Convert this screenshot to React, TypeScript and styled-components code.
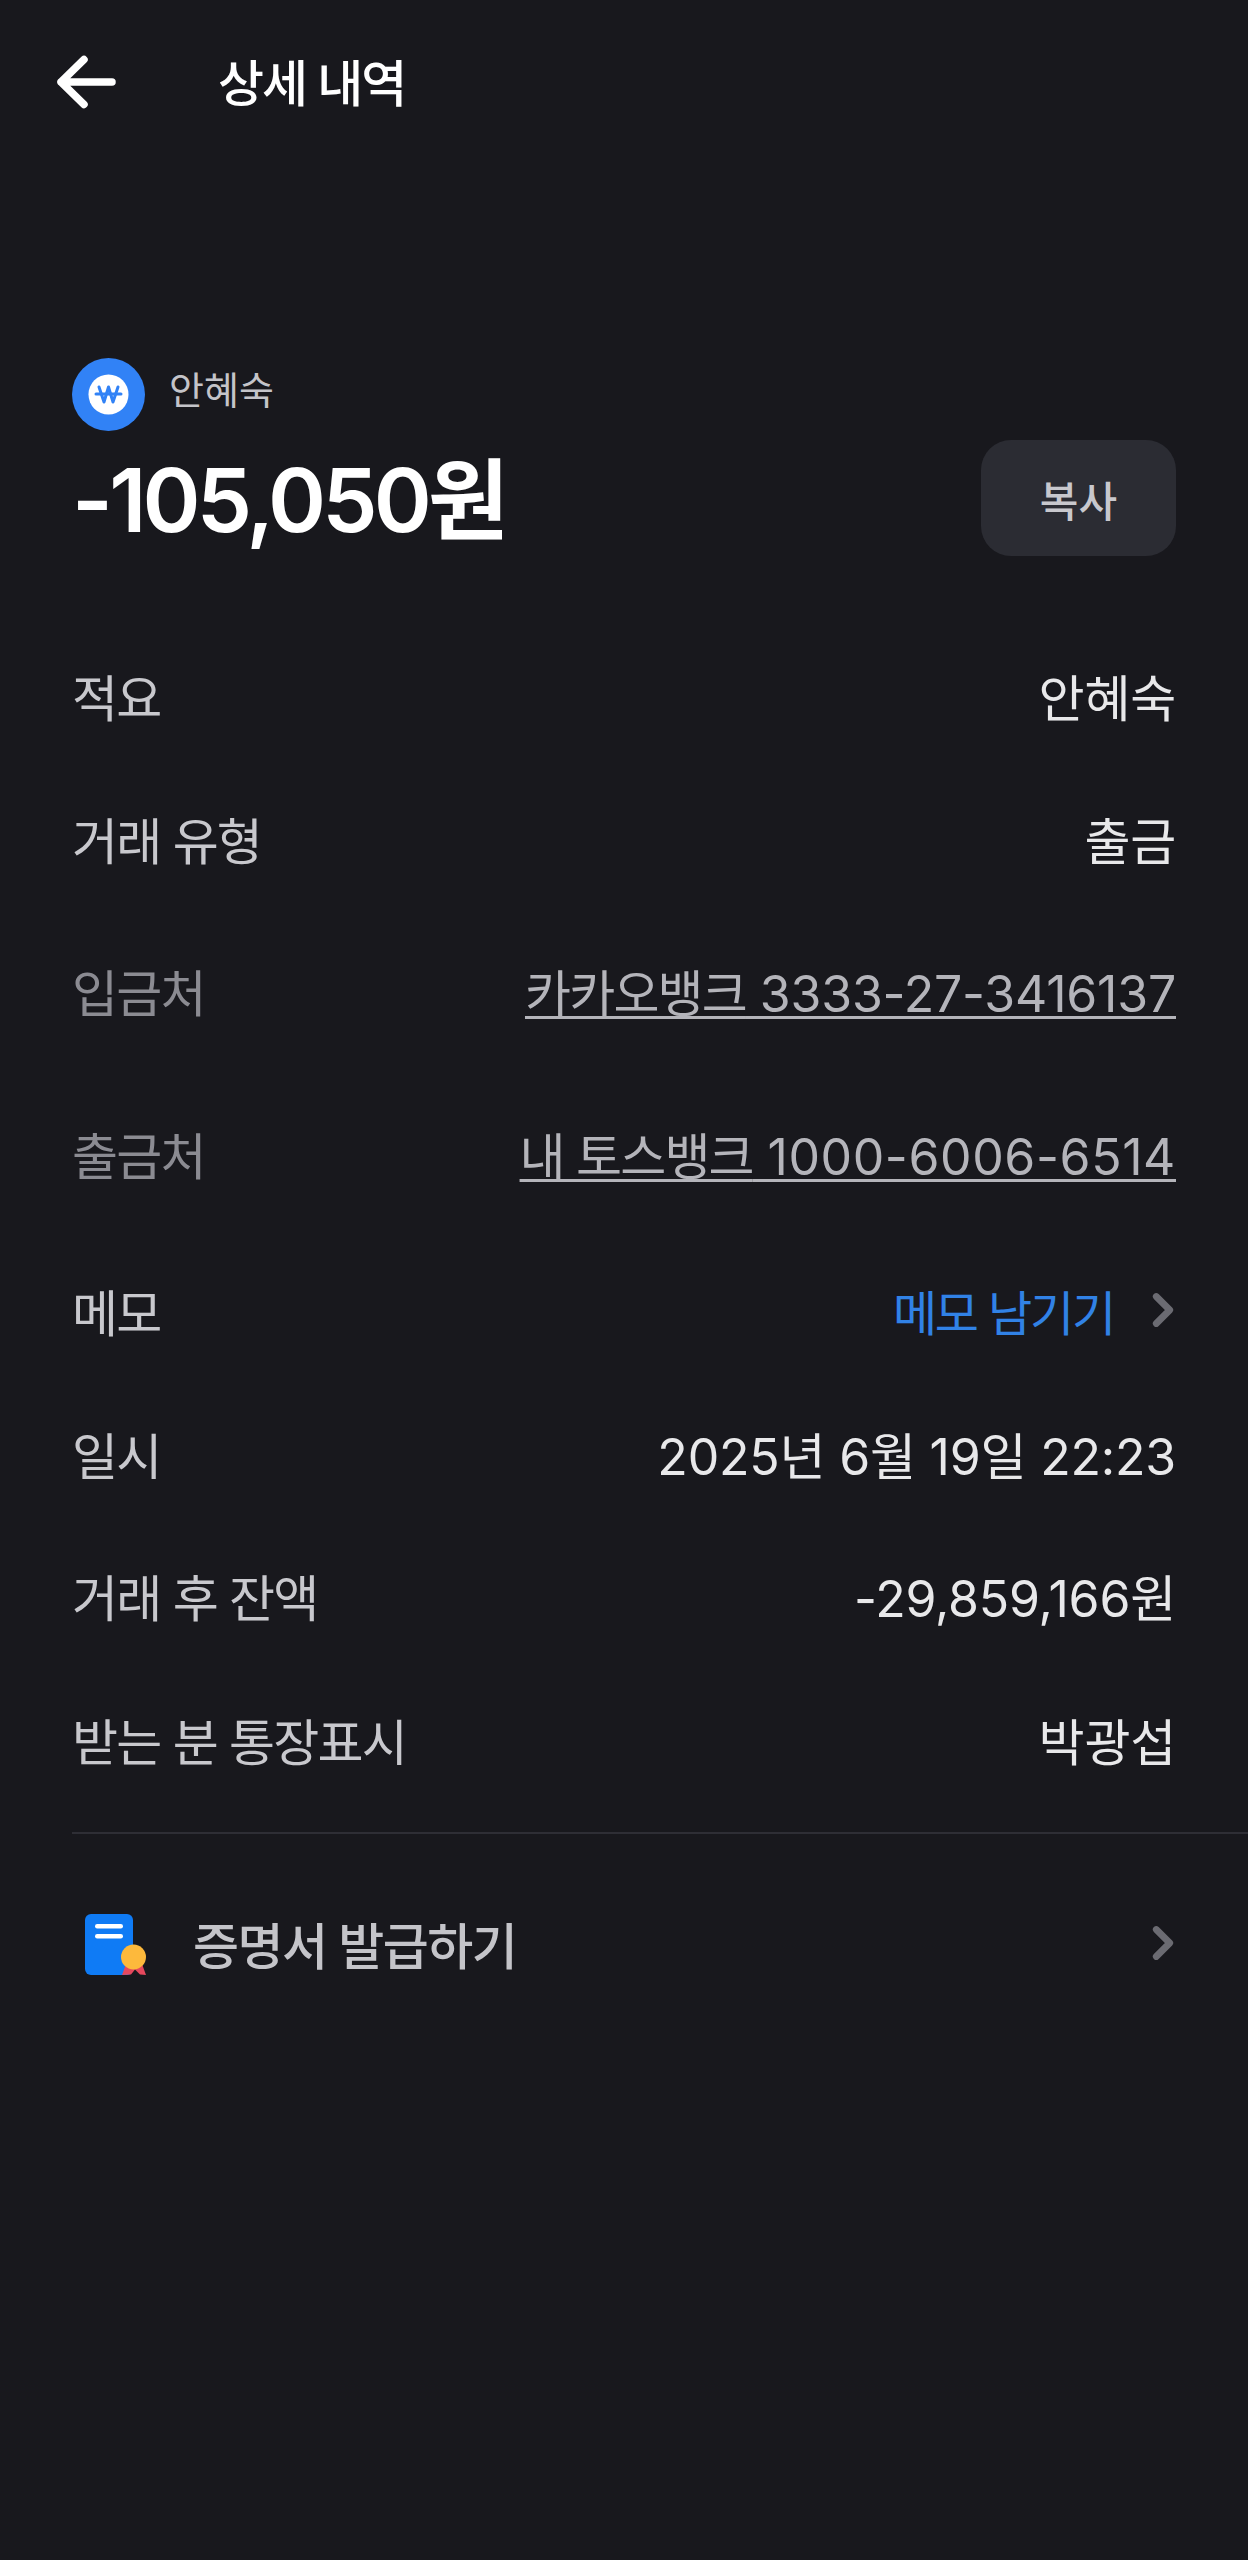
import styled, { createGlobalStyle } from 'styled-components';
import { ChevronRight } from 'lucide-react';

const GlobalStyle = createGlobalStyle`
  html, body {
    margin: 0;
    background: #18181d;
  }
  * {
    box-sizing: border-box;
  }
`;

const Page = styled.div`
  width: 1248px;
  height: 2560px;
  background: #18181d;
  font-family: Inter, 'Noto Sans CJK KR', sans-serif;
  color: #eeeef0;
  overflow: hidden;
`;

const Header = styled.header`
  display: flex;
  align-items: center;
  height: 164px;
  padding-left: 54px;
`;

const BackIcon = styled.svg`
  flex: none;
  width: 66px;
  height: 58px;
`;

const Title = styled.h1`
  margin: -5px 0 0 98px;
  font-size: 50px;
  font-weight: 500;
  letter-spacing: -2px;
  color: #fff;
`;

const Summary = styled.section`
  display: flex;
  align-items: flex-end;
  justify-content: space-between;
  margin-top: 194px;
  padding: 0 72px;
`;

const SummaryText = styled.div`
  display: flex;
  flex-direction: column;
`;

const Account = styled.div`
  display: flex;
  align-items: center;
  gap: 24px;
`;

const AccountName = styled.span`
  font-size: 38px;
  color: #c4c4c9;
  margin-bottom: 14px;
`;

const Amount = styled.div`
  font-size: 88px;
  line-height: 100px;
  font-weight: 600;
  letter-spacing: -3.8px;
  color: #fff;
  margin-top: 19px;
`;

const CopyButton = styled.button`
  width: 195px;
  height: 116px;
  margin-bottom: -6px;
  border: 0;
  border-radius: 30px;
  background: #2b2c33;
  color: #c8c8cd;
  font-family: inherit;
  font-size: 42px;
  font-weight: 500;
`;

const Rows = styled.div`
  display: flex;
  flex-direction: column;
  margin-top: 73px;
`;

const Row = styled.div<{ $height: number }>`
  display: flex;
  align-items: center;
  justify-content: space-between;
  height: ${(p) => p.$height}px;
  padding: 0 72px;
  font-size: 50px;
  letter-spacing: -0.2px;
`;

const Label = styled.span<{ $muted?: boolean }>`
  letter-spacing: -1.8px;
  color: ${(p) => (p.$muted ? '#8b8b92' : '#c8c8cd')};
`;

const Value = styled.span`
  color: #e8e8ea;
`;

const LinkValue = styled.span<{ $spacing: number }>`
  color: #b4b4ba;
  letter-spacing: ${(p) => p.$spacing}px;
  text-decoration: underline;
  text-underline-offset: 4px;
  text-decoration-thickness: 3px;
`;

const BankName = styled.span`
  letter-spacing: -1.8px;
`;

const MemoLink = styled.span`
  display: flex;
  align-items: center;
  gap: 22px;
  font-size: 48px;
  letter-spacing: -2.2px;
  color: #3182e6;
`;

const Chevron = styled(ChevronRight)`
  flex: none;
  color: #6b6b72;
  margin-right: -14px;
`;

const Divider = styled.div`
  height: 2px;
  margin: 23px 0 0 72px;
  background: #2e2e35;
`;

const CertificateRow = styled.div`
  display: flex;
  align-items: center;
  height: 218px;
  padding: 0 72px 0 85px;
`;

const CertificateLabel = styled.span`
  flex: 1;
  margin-left: 46px;
  font-size: 50px;
  font-weight: 500;
  letter-spacing: -1.5px;
  color: #c4c4c9;
`;

const CertificateSvg = styled.svg`
  flex: none;
  margin-top: 6px;
`;

const WonIcon = () => (
  <svg width="73" height="73" viewBox="0 0 73 73">
    <circle cx="36.5" cy="36.5" r="36.5" fill="#3182f6" />
    <circle cx="36.5" cy="36.5" r="20" fill="#fff" />
    <path
      d="M27 29l5 15 4.5-15 4.5 15 5-15"
      fill="none"
      stroke="#3182f6"
      strokeWidth="3"
      strokeLinecap="round"
      strokeLinejoin="round"
    />
    <path d="M24 36h25" stroke="#3182f6" strokeWidth="3" strokeLinecap="round" />
  </svg>
);

const CertificateIcon = () => (
  <CertificateSvg width="62" height="64" viewBox="0 0 62 64">
    <rect x="0" y="0" width="48" height="61" rx="6" fill="#0f7bf5" />
    <rect x="10" y="10" width="28" height="4.5" rx="2.2" fill="#fff" />
    <rect x="10" y="20" width="28" height="4.5" rx="2.2" fill="#fff" />
    <path d="M41 50h16l4 11-6-.5-5-5-4 5-9 .5z" fill="#e5485d" />
    <circle cx="48.5" cy="43" r="12.5" fill="#fdb93c" />
  </CertificateSvg>
);

const App = () => {
  return (
    <Page>
      <GlobalStyle />
      <Header>
        <BackIcon viewBox="0 0 66 58">
          <path
            d="M58 29H7M30 6.500 7 29l23 22.500"
            fill="none"
            stroke="#fff"
            strokeWidth="7.500"
            strokeLinecap="round"
            strokeLinejoin="round"
          />
        </BackIcon>
        <Title>상세 내역</Title>
      </Header>
      <Summary>
        <SummaryText>
          <Account>
            <WonIcon />
            <AccountName>안혜숙</AccountName>
          </Account>
          <Amount>-105,050원</Amount>
        </SummaryText>
        <CopyButton>복사</CopyButton>
      </Summary>
      <Rows>
        <Row $height={143}>
          <Label>적요</Label>
          <Value>안혜숙</Value>
        </Row>
        <Row $height={143}>
          <Label>거래 유형</Label>
          <Value>출금</Value>
        </Row>
        <Row $height={162}>
          <Label $muted>입금처</Label>
          <LinkValue $spacing={-0.2}>
            <BankName>카카오뱅크</BankName> 3333-27-3416137
          </LinkValue>
        </Row>
        <Row $height={164}>
          <Label $muted>출금처</Label>
          <LinkValue $spacing={0.6}>
            <BankName>내 토스뱅크</BankName> 1000-6006-6514
          </LinkValue>
        </Row>
        <Row $height={149}>
          <Label>메모</Label>
          <MemoLink>
            메모 남기기
            <Chevron size={54} strokeWidth={3} />
          </MemoLink>
        </Row>
        <Row $height={138}>
          <Label>일시</Label>
          <Value>2025년 6월 19일 22:23</Value>
        </Row>
        <Row $height={146}>
          <Label>거래 후 잔액</Label>
          <Value>-29,859,166원</Value>
        </Row>
        <Row $height={141}>
          <Label>받는 분 통장표시</Label>
          <Value>박광섭</Value>
        </Row>
      </Rows>
      <Divider />
      <CertificateRow>
        <CertificateIcon />
        <CertificateLabel>증명서 발급하기</CertificateLabel>
        <Chevron size={54} strokeWidth={3} />
      </CertificateRow>
    </Page>
  );
};

export default App;
